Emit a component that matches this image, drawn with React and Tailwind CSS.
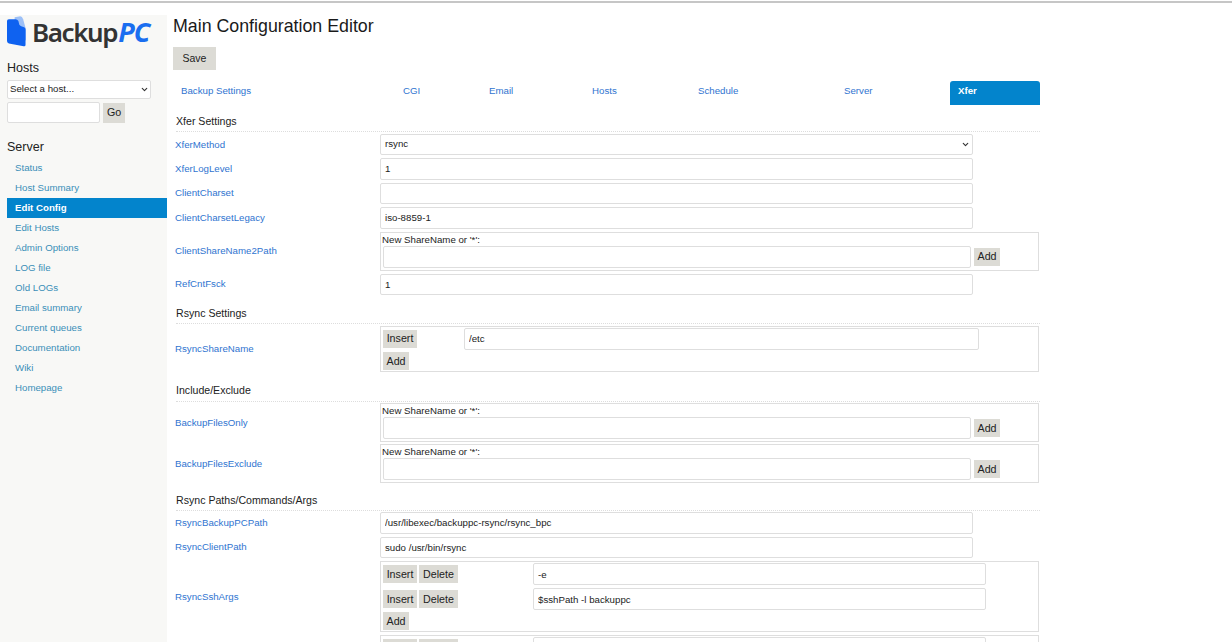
import { ChevronDown } from "lucide-react"

const navLinks = [
    "Status",
    "Host Summary",
    "Edit Config",
    "Edit Hosts",
    "Admin Options",
    "LOG file",
    "Old LOGs",
    "Email summary",
    "Current queues",
    "Documentation",
    "Wiki",
    "Homepage",
]

const tabs = [
    { name: "Backup Settings", width: "w-[222px]" },
    { name: "CGI", width: "w-[86px]" },
    { name: "Email", width: "w-[103px]" },
    { name: "Hosts", width: "w-[106px]" },
    { name: "Schedule", width: "w-[146px]" },
    { name: "Server", width: "w-[114px]" },
]

function Btn({ children, className = "" }) {
    return (
        <button className={`bg-[#dcdbd5] text-[#222] text-[10.7px] h-[18px] px-[3.5px] leading-none ${className}`}>
            {children}
        </button>
    )
}

function TextInput({ value = "", className = "w-[593px] h-[21.5px]" }) {
    return (
        <input
            readOnly
            defaultValue={value}
            className={`border border-[#dedede] rounded-[2px] bg-white px-[4px] text-[9.7px] text-[#222] outline-none ${className}`}
        />
    )
}

function SelectBox({ value, className = "" }) {
    return (
        <div className={`border border-[#dedede] rounded-[2px] bg-white flex items-center justify-between text-[9.7px] text-[#222] ${className}`}>
            <span>{value}</span>
            <ChevronDown size={9} strokeWidth={3} className="text-[#333]" />
        </div>
    )
}

function Section({ title, className = "", pad = "pb-[3px]" }) {
    return (
        <div className={`ml-[3px] w-[864px] border-b border-dotted border-[#dddddd] text-[10.6px] leading-[13px] text-[#222] ${pad} ${className}`}>
            {title}
        </div>
    )
}

function Row({ label, children, className = "" }) {
    return (
        <div className={`flex items-center ${className}`}>
            <a className="ml-[2px] w-[205px] pt-[1px] text-[9.7px] text-[#2f74d0]">{label}</a>
            {children}
        </div>
    )
}

function Box({ children, className = "" }) {
    return <div className={`w-[659px] border border-[#dedede] ${className}`}>{children}</div>
}

function NewShare() {
    return (
        <Box className="h-[39px] pl-[2px]">
            <div className="-ml-[1px] text-[9.7px] leading-[12px] text-[#222] mt-[1px]">New ShareName or '*':</div>
            <div className="flex items-center gap-[3px]">
                <TextInput className="w-[588px] h-[22px]" />
                <Btn>Add</Btn>
            </div>
        </Box>
    )
}

function App() {
    return (
        <div className="h-[642px] w-full overflow-hidden bg-white font-['Liberation_Sans',Arial,sans-serif]">
            <div className="h-[3px] border-b-2 border-[#c6c6c6]"></div>
            <div className="flex mt-[12px]">
                {/* Sidebar */}
                <aside className="w-[167px] h-[627px] bg-[#f8f8f6] pl-[7px] shrink-0">
                    <div className="flex items-center h-[32px]">
                        <svg width="19" height="31" viewBox="0 0 20 32">
                            <path d="M8 1 L14 0 Q16 0 17 3 L20 14 L20 26 L8 10 Z" fill="#9dc0f7" />
                            <path d="M2 3 L9 3 Q11 3 12 5 L13 9 Q13.500 10 15 10.500 L18 11.500 Q19.500 12 19.500 14 L19.500 30 Q19.500 32 17.500 31.500 L2 28.500 Q0 28 0 26 L0 5 Q0 3 2 3 Z" fill="#0f62f0" />
                        </svg>
                        <span className="ml-[6px] mt-[1px] text-[26px] leading-none tracking-[-1.4px] font-semibold text-[#333] font-['Noto_Sans',sans-serif]">Backup</span>
                        <span className="ml-[1px] mt-[1px] text-[27px] leading-none tracking-[-1px] font-bold italic text-[#1a6ef0] font-['Noto_Sans',sans-serif]">PC</span>
                    </div>
                    <h2 className="mt-[14px] text-[12.5px] leading-[14px] text-[#222]">Hosts</h2>
                    <SelectBox value="Select a host..." className="mt-[5px] w-[144px] h-[19px] pl-[2px] pr-[1px]" />
                    <div className="mt-[3px] flex items-center gap-[3px]">
                        <TextInput className="w-[93px] h-[21px]" />
                        <Btn className="h-[20px] px-[4px]">Go</Btn>
                    </div>
                    <h2 className="mt-[17px] text-[12.5px] leading-[14px] text-[#222]">Server</h2>
                    <nav className="mt-[4px]">
                        {navLinks.map((link) => (
                            <div
                                key={link}
                                className={
                                    link === "Edit Config"
                                        ? "h-[20px] pl-[8px] flex items-center text-[9.7px] font-bold text-white bg-[#0384cc]"
                                        : "h-[20px] pl-[8px] flex items-center text-[9.7px] text-[#3a8fb8]"
                                }
                            >
                                {link}
                            </div>
                        ))}
                    </nav>
                </aside>

                {/* Main */}
                <main className="ml-[6px] flex-1">
                    <h1 className="text-[17.8px] leading-[21px] text-[#1a1a1a] mt-[1px]">Main Configuration Editor</h1>
                    <button className="mt-[10px] block bg-[#dcdbd5] text-[#222] text-[10.5px] w-[43px] h-[23px]">Save</button>

                    {/* Tabs */}
                    <div className="mt-[11px] flex h-[24px] text-[9.7px] text-[#2f74d0]">
                        {tabs.map((tab) => (
                            <div key={tab.name} className={`${tab.width} pl-[8px] pt-[4px] leading-[11px]`}>{tab.name}</div>
                        ))}
                        <div className="w-[90px] pl-[8px] pt-[4px] leading-[11px] rounded-t-[3px] bg-[#0384cc] text-white font-bold">Xfer</div>
                    </div>

                    <Section title="Xfer Settings" className="mt-[10px]" />
                    <div className="flex flex-col gap-[3px] mt-[2px]">
                        <Row label="XferMethod">
                            <SelectBox value="rsync" className="w-[593px] h-[21px] pl-[4px] pr-[2px]" />
                        </Row>
                        <Row label="XferLogLevel"><TextInput value="1" /></Row>
                        <Row label="ClientCharset"><TextInput /></Row>
                        <Row label="ClientCharsetLegacy"><TextInput value="iso-8859-1" /></Row>
                        <Row label="ClientShareName2Path"><NewShare /></Row>
                        <Row label="RefCntFsck"><TextInput value="1" /></Row>
                    </div>

                    <Section title="Rsync Settings" className="mt-[12px]" />
                    <div className="mt-[2px]">
                        <Row label="RsyncShareName">
                            <Box className="h-[46px] pl-[2px] pt-[1px]">
                                <div className="flex items-center">
                                    <Btn className="w-[34px]">Insert</Btn>
                                    <TextInput value="/etc" className="ml-[47px] w-[515px] h-[21.5px]" />
                                </div>
                                <Btn className="mt-[2.5px] block">Add</Btn>
                            </Box>
                        </Row>
                    </div>

                    <Section title="Include/Exclude" className="mt-[12px]" pad="pb-[4px]" />
                    <div className="flex flex-col gap-[2px] mt-[1px]">
                        <Row label="BackupFilesOnly"><NewShare /></Row>
                        <Row label="BackupFilesExclude"><NewShare /></Row>
                    </div>

                    <Section title="Rsync Paths/Commands/Args" className="mt-[11px]" />
                    <div className="flex flex-col gap-[3px] mt-[1px]">
                        <Row label="RsyncBackupPCPath"><TextInput value="/usr/libexec/backuppc-rsync/rsync_bpc" /></Row>
                        <Row label="RsyncClientPath"><TextInput value="sudo /usr/bin/rsync" /></Row>
                        <Row label="RsyncSshArgs">
                            <Box className="h-[71px] pl-[2px] pt-[1px]">
                                <div className="flex items-center">
                                    <Btn className="w-[34px]">Insert</Btn>
                                    <Btn className="ml-[2px] w-[39px]">Delete</Btn>
                                    <TextInput value="-e" className="ml-[75px] w-[453px] h-[22px]" />
                                </div>
                                <div className="flex items-center mt-[3px]">
                                    <Btn className="w-[34px]">Insert</Btn>
                                    <Btn className="ml-[2px] w-[39px]">Delete</Btn>
                                    <TextInput value="$sshPath -l backuppc" className="ml-[75px] w-[453px] h-[22px]" />
                                </div>
                                <Btn className="mt-[2px] block">Add</Btn>
                            </Box>
                        </Row>
                        <Row label="">
                            <Box className="h-[71px] pl-[2px] pt-[1px]">
                                <div className="flex items-center">
                                    <Btn className="w-[34px]">Insert</Btn>
                                    <Btn className="ml-[2px] w-[39px]">Delete</Btn>
                                    <TextInput className="ml-[75px] w-[453px] h-[22px]" />
                                </div>
                            </Box>
                        </Row>
                    </div>
                </main>
            </div>
        </div>
    )
}

export default App
